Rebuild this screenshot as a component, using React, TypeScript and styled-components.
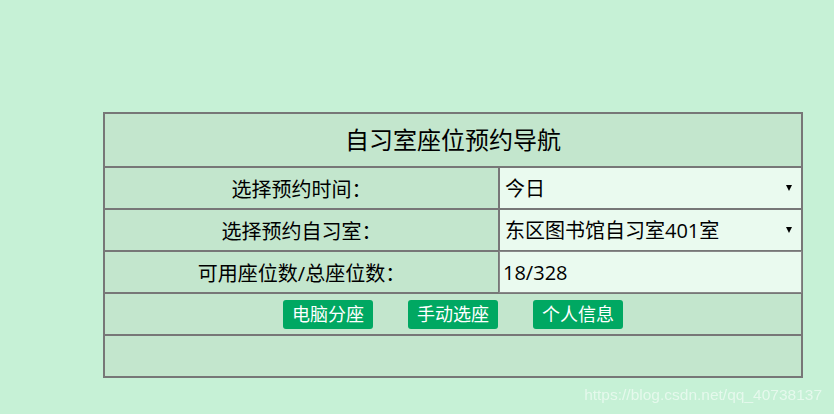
import styled, { createGlobalStyle } from 'styled-components';

const GlobalStyle = createGlobalStyle`
  html, body {
    margin: 0;
    padding: 0;
    background: #c6f1d6;
    font-family: "Open Sans", "Noto Sans CJK SC", "Microsoft YaHei", sans-serif;
  }
`;

// 自习室预约导航页
function App() {
  return (
    <>
      <GlobalStyle />
      <PageWrapper>
        <NavTable>
          <colgroup>
            <col style={{ width: 395 }} />
            <col />
          </colgroup>
          <tbody>
            <tr>
              <TitleCell colSpan={2}>自习室座位预约导航</TitleCell>
            </tr>
            <tr>
              <LabelCell>选择预约时间：</LabelCell>
              <FieldCell>
                <SelectBox defaultValue="today">
                  <option value="today">今日</option>
                  <option value="tomorrow">明日</option>
                </SelectBox>
                <SelectArrow />
              </FieldCell>
            </tr>
            <tr>
              <LabelCell>选择预约自习室：</LabelCell>
              <FieldCell>
                <SelectBox defaultValue="401">
                  <option value="401">东区图书馆自习室401室</option>
                </SelectBox>
                <SelectArrow />
              </FieldCell>
            </tr>
            <tr>
              <LabelCell>可用座位数/总座位数：</LabelCell>
              <FieldCell>
                <CountInput readOnly value="18/328" />
              </FieldCell>
            </tr>
            <tr>
              <ButtonCell colSpan={2}>
                <ButtonRow>
                  <NavButton>电脑分座</NavButton>
                  <NavButton>手动选座</NavButton>
                  <NavButton>个人信息</NavButton>
                </ButtonRow>
              </ButtonCell>
            </tr>
            <tr>
              <EmptyCell colSpan={2} />
            </tr>
          </tbody>
        </NavTable>
      </PageWrapper>
      <Watermark>https://blog.csdn.net/qq_40738137</Watermark>
    </>
  );
}

export default App;

const PageWrapper = styled.div`
  padding: 112px 0 0 103px;
  min-height: 414px;
  box-sizing: border-box;
`;

const NavTable = styled.table`
  width: 700px;
  border-collapse: collapse;
  border: 2px solid #777;
  background: #c3e6cd;
  color: #000;
  table-layout: fixed;

  td {
    border: 2px solid #777;
    padding: 0;
  }
`;

const TitleCell = styled.td`
  height: 52px;
  text-align: center;
  font-size: 24px;
  line-height: 52px;
`;

const LabelCell = styled.td`
  height: 40px;
  text-align: center;
  font-size: 20px;
`;

const FieldCell = styled.td`
  position: relative;
  height: 40px;
  background: #eafaef;
`;

const SelectBox = styled.select`
  appearance: none;
  display: block;
  width: 100%;
  height: 40px;
  margin: 0;
  padding: 0 0 0 5px;
  border: none;
  outline: none;
  background: #eafaef;
  color: #000;
  font-family: inherit;
  font-size: 20px;
`;

const SelectArrow = styled.span`
  position: absolute;
  right: 9px;
  top: 17px;
  width: 0;
  height: 0;
  border-left: 3.5px solid transparent;
  border-right: 3.5px solid transparent;
  border-top: 6px solid #000;
  pointer-events: none;
`;

const CountInput = styled.input`
  display: block;
  box-sizing: border-box;
  width: calc(100% + 2px);
  height: 42px;
  margin: -1px 0 -1px -1px;
  padding: 0 0 0 3px;
  border: 1px solid #888;
  background: #eafaef;
  color: #000;
  font-family: inherit;
  font-size: 20px;
  outline: none;
`;

const ButtonCell = styled.td`
  height: 40px;
`;

const ButtonRow = styled.div`
  display: flex;
  justify-content: center;
  align-items: center;
  gap: 35px;
  padding-top: 1px;
`;

const NavButton = styled.button`
  width: 90px;
  height: 29px;
  padding: 0;
  border: none;
  border-radius: 3px;
  background: #00a862;
  color: #fff;
  font-family: inherit;
  font-size: 18px;
  line-height: 29px;
  cursor: pointer;
`;

const EmptyCell = styled.td`
  height: 40px;
`;

const Watermark = styled.div`
  position: fixed;
  right: 12px;
  bottom: 10px;
  color: rgba(255, 255, 255, 0.55);
  font-family: "Liberation Sans", Arial, sans-serif;
  font-size: 15.5px;
  pointer-events: none;
`;
